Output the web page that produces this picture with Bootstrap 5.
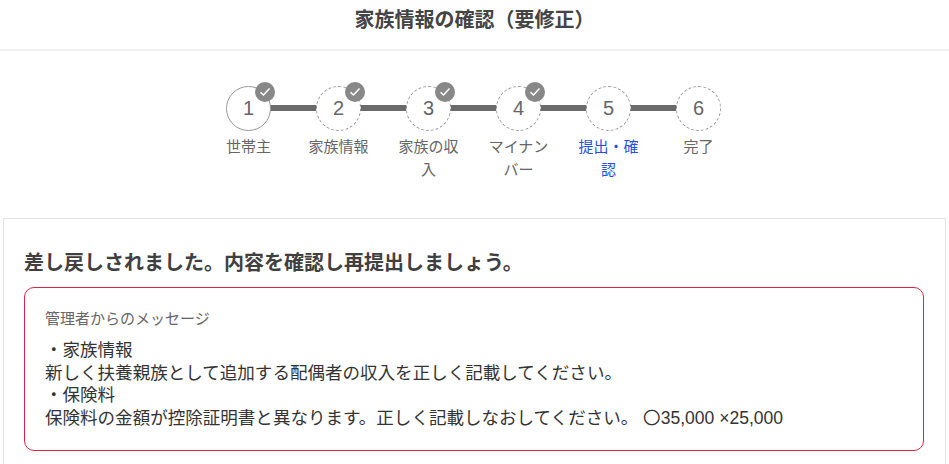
<!DOCTYPE html>
<html lang="ja">
<head>
<meta charset="utf-8">
<title>家族情報の確認（要修正）</title>
<link href="https://cdn.jsdelivr.net/npm/bootstrap@5.3.0/dist/css/bootstrap.min.css" rel="stylesheet">
<style>
html,body{height:464px;overflow:hidden}
body{font-family:"Liberation Sans","Noto Sans CJK JP",sans-serif;color:#333;background:#fff}
.top-bar{height:51px;border-bottom:2px solid #f0f0f0;font-size:20px;color:#444;padding-bottom:9px}
.stepper{padding-top:35px;padding-right:2px;height:167px}
.step-item{width:90px}
.step-circle{width:45px;height:45px;border:1px dashed #999;border-radius:50%;font-size:20px;color:#666;background:#fff;z-index:1;padding-bottom:1px}
.step-item.is-first .step-circle{border-style:solid}
.step-line{left:50%;top:19px;width:90px;height:6px;background:#6b6b6b}
.step-check{top:-5px;right:-5px;width:20px;height:20px;border-radius:50%;background:#888}
.step-label{width:70px;margin-top:4px;font-size:15px;line-height:23px;color:#666;text-align:center}
.step-item.is-current .step-label{color:#1f50e0}
.review-panel{margin:0 3px;border:1px solid #e4e4e4;padding:29px 21px 30px 20px}
.review-title{font-size:20px;line-height:30px;font-weight:700;color:#404040;margin:0 0 9px}
.message-box{border:1px solid #dc2545;border-radius:10px;padding:19px 20px 20px;height:164px}
.message-head{font-size:15px;line-height:23px;color:#666;margin-bottom:9px}
.message-body{font-size:17.55px;line-height:22.7px;color:#333}
</style>
</head>
<body>
<header class="top-bar d-flex align-items-center justify-content-center fw-bold">家族情報の確認（要修正）</header>
<div class="stepper d-flex justify-content-center">
  <div class="step-item is-first position-relative d-flex flex-column align-items-center">
    <div class="step-line position-absolute"></div>
    <div class="step-circle position-relative d-flex align-items-center justify-content-center">1
      <span class="step-check position-absolute d-flex align-items-center justify-content-center"><svg width="12" height="10" viewBox="0 0 12 10"><path d="M1.5 5.2 4.5 8 10.5 1.6" fill="none" stroke="#fff" stroke-width="1.5"/></svg></span>
    </div>
    <div class="step-label">世帯主</div>
  </div>
  <div class="step-item position-relative d-flex flex-column align-items-center">
    <div class="step-line position-absolute"></div>
    <div class="step-circle position-relative d-flex align-items-center justify-content-center">2
      <span class="step-check position-absolute d-flex align-items-center justify-content-center"><svg width="12" height="10" viewBox="0 0 12 10"><path d="M1.5 5.2 4.5 8 10.5 1.6" fill="none" stroke="#fff" stroke-width="1.5"/></svg></span>
    </div>
    <div class="step-label">家族情報</div>
  </div>
  <div class="step-item position-relative d-flex flex-column align-items-center">
    <div class="step-line position-absolute"></div>
    <div class="step-circle position-relative d-flex align-items-center justify-content-center">3
      <span class="step-check position-absolute d-flex align-items-center justify-content-center"><svg width="12" height="10" viewBox="0 0 12 10"><path d="M1.5 5.2 4.5 8 10.5 1.6" fill="none" stroke="#fff" stroke-width="1.5"/></svg></span>
    </div>
    <div class="step-label">家族の収入</div>
  </div>
  <div class="step-item position-relative d-flex flex-column align-items-center">
    <div class="step-line position-absolute"></div>
    <div class="step-circle position-relative d-flex align-items-center justify-content-center">4
      <span class="step-check position-absolute d-flex align-items-center justify-content-center"><svg width="12" height="10" viewBox="0 0 12 10"><path d="M1.5 5.2 4.5 8 10.5 1.6" fill="none" stroke="#fff" stroke-width="1.5"/></svg></span>
    </div>
    <div class="step-label">マイナンバー</div>
  </div>
  <div class="step-item is-current position-relative d-flex flex-column align-items-center">
    <div class="step-line position-absolute"></div>
    <div class="step-circle position-relative d-flex align-items-center justify-content-center">5</div>
    <div class="step-label">提出・確認</div>
  </div>
  <div class="step-item position-relative d-flex flex-column align-items-center">
    <div class="step-circle position-relative d-flex align-items-center justify-content-center">6</div>
    <div class="step-label">完了</div>
  </div>
</div>
<section class="review-panel">
  <h2 class="review-title">差し戻しされました。内容を確認し再提出しましょう。</h2>
  <div class="message-box">
    <div class="message-head">管理者からのメッセージ</div>
    <div class="message-body">・家族情報<br>新しく扶養親族として追加する配偶者の収入を正しく記載してください。<br>・保険料<br>保険料の金額が控除証明書と異なります。正しく記載しなおしてください。 〇35,000 ×25,000</div>
  </div>
</section>
<script src="https://cdn.jsdelivr.net/npm/bootstrap@5.3.0/dist/js/bootstrap.bundle.min.js"></script>
</body>
</html>
